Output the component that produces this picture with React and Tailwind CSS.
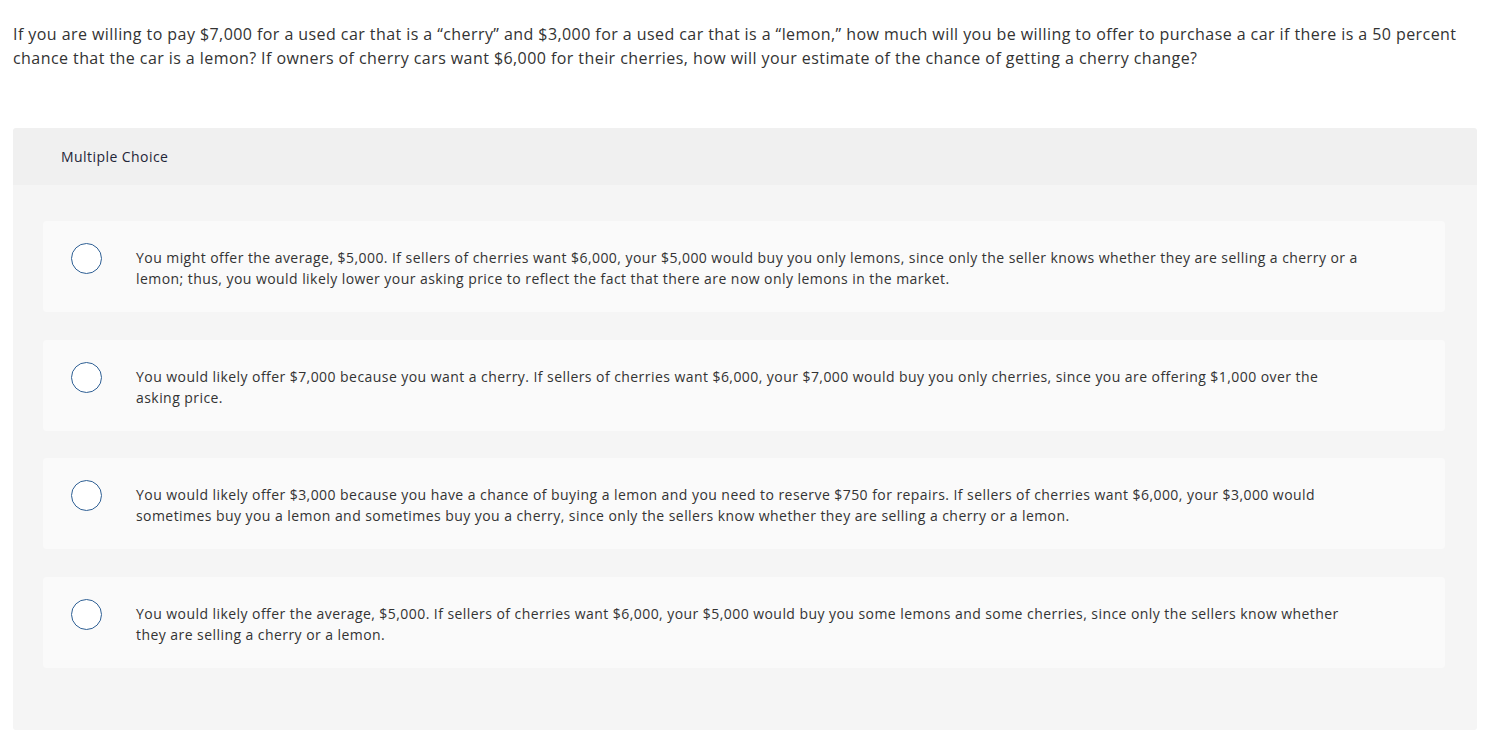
import React from "react";

const choices = [
  "You might offer the average, $5,000. If sellers of cherries want $6,000, your $5,000 would buy you only lemons, since only the seller knows whether they are selling a cherry or a lemon; thus, you would likely lower your asking price to reflect the fact that there are now only lemons in the market.",
  "You would likely offer $7,000 because you want a cherry. If sellers of cherries want $6,000, your $7,000 would buy you only cherries, since you are offering $1,000 over the asking price.",
  "You would likely offer $3,000 because you have a chance of buying a lemon and you need to reserve $750 for repairs. If sellers of cherries want $6,000, your $3,000 would sometimes buy you a lemon and sometimes buy you a cherry, since only the sellers know whether they are selling a cherry or a lemon.",
  "You would likely offer the average, $5,000. If sellers of cherries want $6,000, your $5,000 would buy you some lemons and some cherries, since only the sellers know whether they are selling a cherry or a lemon.",
];

const Choice = ({ text }) => (
  <div className="flex items-start rounded-[4px] bg-[#fafafa] pl-[28px] pr-[86px] pt-[26px] pb-[23px]">
    {/* radio */}
    <div className="mt-[-4px] h-[31px] w-[31px] flex-shrink-0 rounded-full border-[1.5px] border-[#2e5f94] bg-white" />
    <p className="ml-[34px] text-[14px] leading-[21px] tracking-[0.44px] text-[#333]">{text}</p>
  </div>
);

export default function App() {
  return (
    <div
      className="min-h-screen bg-white"
      style={{ fontFamily: '"Open Sans", "Liberation Sans", sans-serif' }}
    >
      <p className="px-[13px] pt-[22px] text-[16px] leading-[24px] tracking-[0.43px] text-[#333]">
        If you are willing to pay $7,000 for a used car that is a “cherry” and $3,000 for a used car that is a
        “lemon,” how much will you be willing to offer to purchase a car if there is a 50 percent chance that the
        car is a lemon? If owners of cherry cars want $6,000 for their cherries, how will your estimate of the
        chance of getting a cherry change?
      </p>

      <div className="ml-[13px] mr-[12px] mt-[58px] overflow-hidden rounded-[3px]">
        <div className="flex h-[57px] items-center bg-[#f0f0f0] pl-[48px] text-[14px] tracking-[0.44px] text-[#1f2638]">
          Multiple Choice
        </div>
        <div className="flex flex-col gap-[27.5px] bg-[#f5f5f5] pl-[30px] pr-[32px] pt-[36px] pb-[62px]">
          {choices.map((c, i) => (
            <Choice key={i} text={c} />
          ))}
        </div>
      </div>
    </div>
  );
}
